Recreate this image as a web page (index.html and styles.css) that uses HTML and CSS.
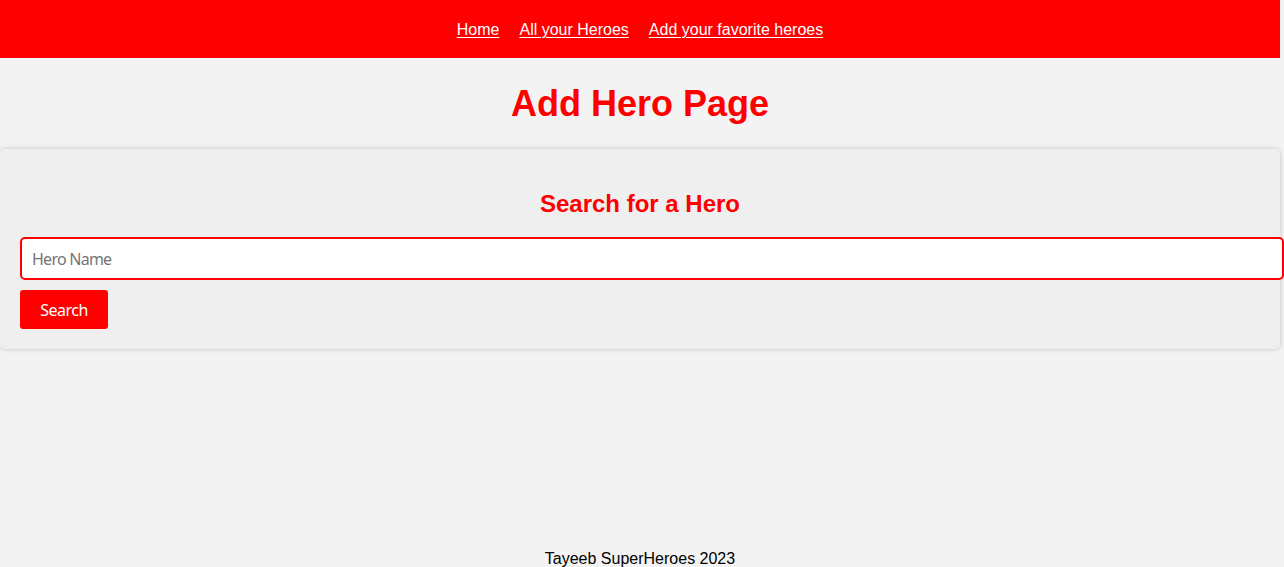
FILE: index.html
```html
<!DOCTYPE html>
<html lang="en">
<head>
<meta charset="utf-8">
<title>Add Hero Page</title>
<link rel="stylesheet" href="styles.css">
</head>
<body>
<div class="page">
<nav class="nav">
<a class="nav-link" href="#">Home</a>
<a class="nav-link" href="#">All your Heroes</a>
<a class="nav-link" href="#">Add your favorite heroes</a>
</nav>
<h1 class="title">Add Hero Page</h1>
<form class="search">
<h2 class="search-title">Search for a Hero</h2>
<input class="search-input" type="text" placeholder="Hero Name">
<button class="search-button" type="button">Search</button>
</form>
<footer class="footer">Tayeeb SuperHeroes 2023</footer>
</div>
</body>
</html>
```
FILE: styles.css
```css
body {
  margin: 0;
  background: #f3f3f3;
  font: 16px/18px "Liberation Sans", Arial, sans-serif;
  overflow: hidden;
}
.page {
  width: 1280px;
  height: 567px;
  display: flex;
  flex-direction: column;
}
.nav {
  display: flex;
  justify-content: center;
  gap: 20px;
  padding: 21px 20px 19px;
  background: #f00;
}
.nav-link {
  color: #fff;
  text-decoration-thickness: 1px;
  text-underline-offset: 2px;
}
.title {
  margin: 25px 0 24px;
  font-size: 36px;
  line-height: 42px;
  text-align: center;
  color: #f00;
}
.search {
  padding: 20px;
  background: #efefef;
  border-radius: 5px;
  box-shadow: 0 0 5px rgba(0, 0, 0, 0.2);
}
.search-title {
  margin: 21px 0 19px;
  font-size: 24px;
  line-height: 28px;
  text-align: center;
  color: #f00;
}
.search-input {
  display: block;
  box-sizing: border-box;
  width: 1264px;
  height: 43px;
  margin: 0 0 10px;
  padding: 10px;
  border: 2px solid #f00;
  border-radius: 5px;
  background: #fff;
  font: 16px "Noto Sans", sans-serif;
  letter-spacing: -0.75px;
}
.search-button {
  display: block;
  width: 88px;
  height: 39px;
  padding: 0;
  border: 0;
  border-radius: 3px;
  background: #f00;
  color: #fff;
  font: 16px "Noto Sans", sans-serif;
  letter-spacing: -0.5px;
}
.footer {
  height: 17px;
  margin-top: auto;
  text-align: center;
}
```
